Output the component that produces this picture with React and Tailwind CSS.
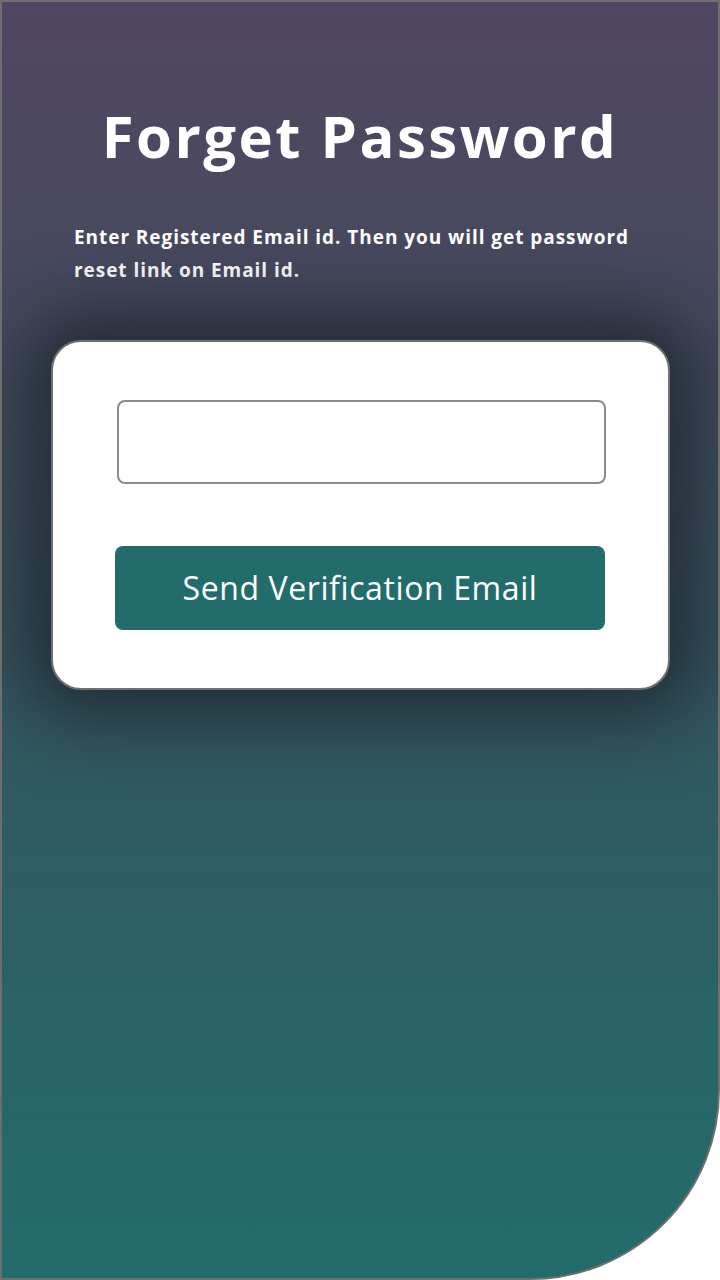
export default function App() {
  return (
    <div className="w-[720px] h-[1280px] bg-white" style={{ fontFamily: '"Open Sans", "Noto Sans", sans-serif' }}>
      <div className="w-full h-full border-2 border-[#6e6e6e] rounded-br-[190px] bg-[linear-gradient(180deg,#524662_0%,#454a5e_25%,#3c4f5e_40%,#2f5c62_65%,#236c6b_100%)] flex flex-col items-center overflow-hidden">
        <h1 className="mt-[94px] text-white font-bold text-[58px] leading-[80px] tracking-[2.5px]">Forget Password</h1>
        <p className="mt-[45px] w-[574px] pl-[1px] text-white font-bold text-[19px] leading-[33px] tracking-[0.95px]">
          Enter Registered Email id. Then you will get password<br />reset link on Email id.
        </p>
        <div className="mt-[53px] w-[619px] h-[350px] shrink-0 bg-white border-2 border-[#707070] rounded-[30px] shadow-[0_0_70px_30px_rgba(20,25,30,0.62)] flex flex-col items-center pt-[58px]">
          <input className="ml-[2px] w-[489px] h-[84px] border-2 border-[#8a8a8a] rounded-[8px] px-4 text-[22px] outline-none" />
          <button className="mt-[62px] w-[490px] h-[84px] bg-[#226d6c] rounded-[8px] text-white text-[32px] tracking-[0.6px]">
            Send Verification Email
          </button>
        </div>
      </div>
    </div>
  );
}
